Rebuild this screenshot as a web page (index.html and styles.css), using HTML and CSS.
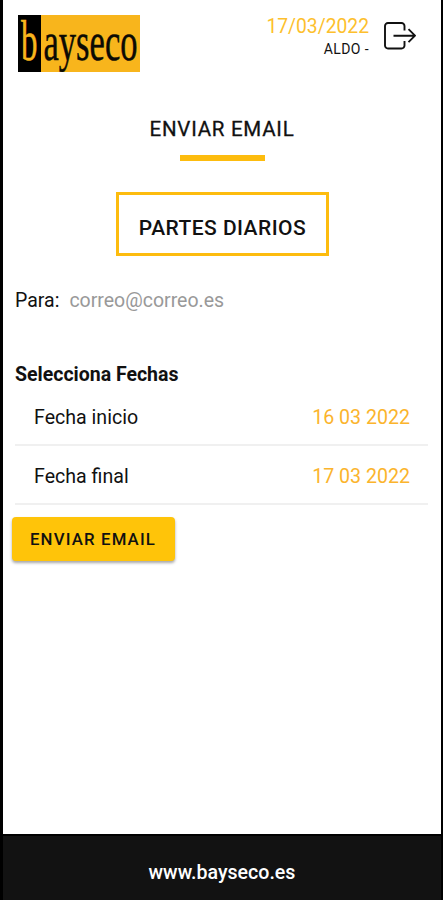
FILE: index.html
```
<!DOCTYPE html>
<html lang="es">
<head>
<meta charset="utf-8">
<title>Enviar email</title>
<link rel="stylesheet" href="styles.css">
</head>
<body>
<div class="app">
  <header class="header">
    <svg class="logo" viewBox="0 0 122 57" role="img" aria-label="bayseco">
      <rect width="122" height="57" fill="#f8b51c"/>
      <rect width="23" height="57" fill="#000"/>
      <text class="logo-text" x="3" y="44.500" textLength="16.500" lengthAdjust="spacingAndGlyphs" font-size="56" fill="#f8b51c" stroke="#f8b51c">b</text>
      <text class="logo-text" x="25.500" y="44.500" textLength="94" lengthAdjust="spacingAndGlyphs" font-size="55" fill="#0c0a04" stroke="#0c0a04">ayseco</text>
    </svg>
    <div class="session">
      <span class="today">17/03/2022</span>
      <span class="user">ALDO -</span>
    </div>
    <svg class="logout" viewBox="0 0 32 28" fill="none" stroke="#111" stroke-width="1.900" stroke-linejoin="round">
      <path d="M20.500 8.500V4a3 3 0 0 0-3-3H4a3 3 0 0 0-3 3v19.500a3 3 0 0 0 3 3h13.500a3 3 0 0 0 3-3V19"/>
      <path d="M9.500 13.700H30.500M24.500 7.200L31 13.700l-6.500 6.500"/>
    </svg>
  </header>
  <main class="main">
    <h1 class="title">ENVIAR EMAIL</h1>
    <div class="rule"></div>
    <div class="report"><span>PARTES DIARIOS</span></div>
    <div class="to"><span class="to-label">Para:</span><span class="to-value">correo@correo.es</span></div>
    <h2 class="subtitle">Selecciona Fechas</h2>
    <div class="row"><span class="name">Fecha inicio</span><span class="date">16 03 2022</span></div>
    <div class="row"><span class="name">Fecha final</span><span class="date">17 03 2022</span></div>
    <button class="send">ENVIAR EMAIL</button>
  </main>
  <footer class="footer"><span>www.bayseco.es</span></footer>
</div>
</body>
</html>
```
FILE: styles.css
```
* { box-sizing: border-box; }
body {
  margin: 0;
  background: #000;
  font-family: Roboto, sans-serif;
  color: #111;
}
.app {
  display: flex;
  flex-direction: column;
  height: 900px;
  padding: 0 2px 0 3px;
}
.header {
  display: flex;
  align-items: flex-start;
  height: 90px;
  padding: 15px 25px 0 15px;
  background: #fff;
}
.logo { width: 122px; height: 57px; }
.logo-text { font-family: "Liberation Serif", serif; stroke-width: .5px; }
.session {
  display: flex;
  flex-direction: column;
  align-items: flex-end;
  margin-left: auto;
}
.today { font-size: 19.300px; line-height: 24px; color: #fdbf2d; }
.user { font-size: 14px; line-height: 20px; letter-spacing: .4px; }
.logout { width: 32px; height: 28px; margin: 7px 0 0 15px; }
.main {
  display: flex;
  flex: 1;
  flex-direction: column;
  background: #fff;
}
.title {
  margin: 27px 0 0;
  font-size: 20.500px;
  font-weight: 400;
  line-height: 24px;
  letter-spacing: .75px;
  text-align: center;
  -webkit-text-stroke: .3px;
}
.rule { width: 85px; height: 6px; margin: 14px 0 0 177px; background: #fdbc0e; }
.report {
  display: flex;
  align-items: center;
  justify-content: center;
  width: 213px;
  height: 64px;
  margin: 31px 0 0 113px;
  padding-top: 7px;
  border: 3px solid #fdbc0e;
  font-size: 21px;
  font-weight: 500;
  letter-spacing: .45px;
}
.to {
  display: flex;
  gap: 10px;
  margin: 33px 0 0 12px;
  font-size: 19.500px;
  line-height: 24px;
}
.to-value { color: #999; }
.subtitle {
  margin: 50px 0 0 12px;
  font-size: 19.500px;
  font-weight: 700;
  line-height: 24px;
}
.row {
  display: flex;
  align-items: center;
  justify-content: space-between;
  height: 59px;
  margin: 0 13px 0 12px;
  padding: 3px 18px 0 19px;
  border-bottom: 2px solid #f0f0f0;
  font-size: 19.600px;
}
.date { color: #fbb42c; }
.send {
  width: 163px;
  height: 44px;
  margin: 12px 0 0 9px;
  padding: 0 1px 1px 0;
  border: 0;
  border-radius: 4px;
  background: #ffc409;
  box-shadow: 0 2px 3px rgba(0, 0, 0, .35);
  color: #111;
  font: 500 16.800px Roboto, sans-serif;
  letter-spacing: 1.150px;
}
.footer {
  display: flex;
  align-items: center;
  justify-content: center;
  height: 66px;
  padding-top: 8px;
  border-top: 2px solid #000;
  background: #121212;
  color: #fff;
  font-size: 19.600px;
  font-weight: 500;
}
```
